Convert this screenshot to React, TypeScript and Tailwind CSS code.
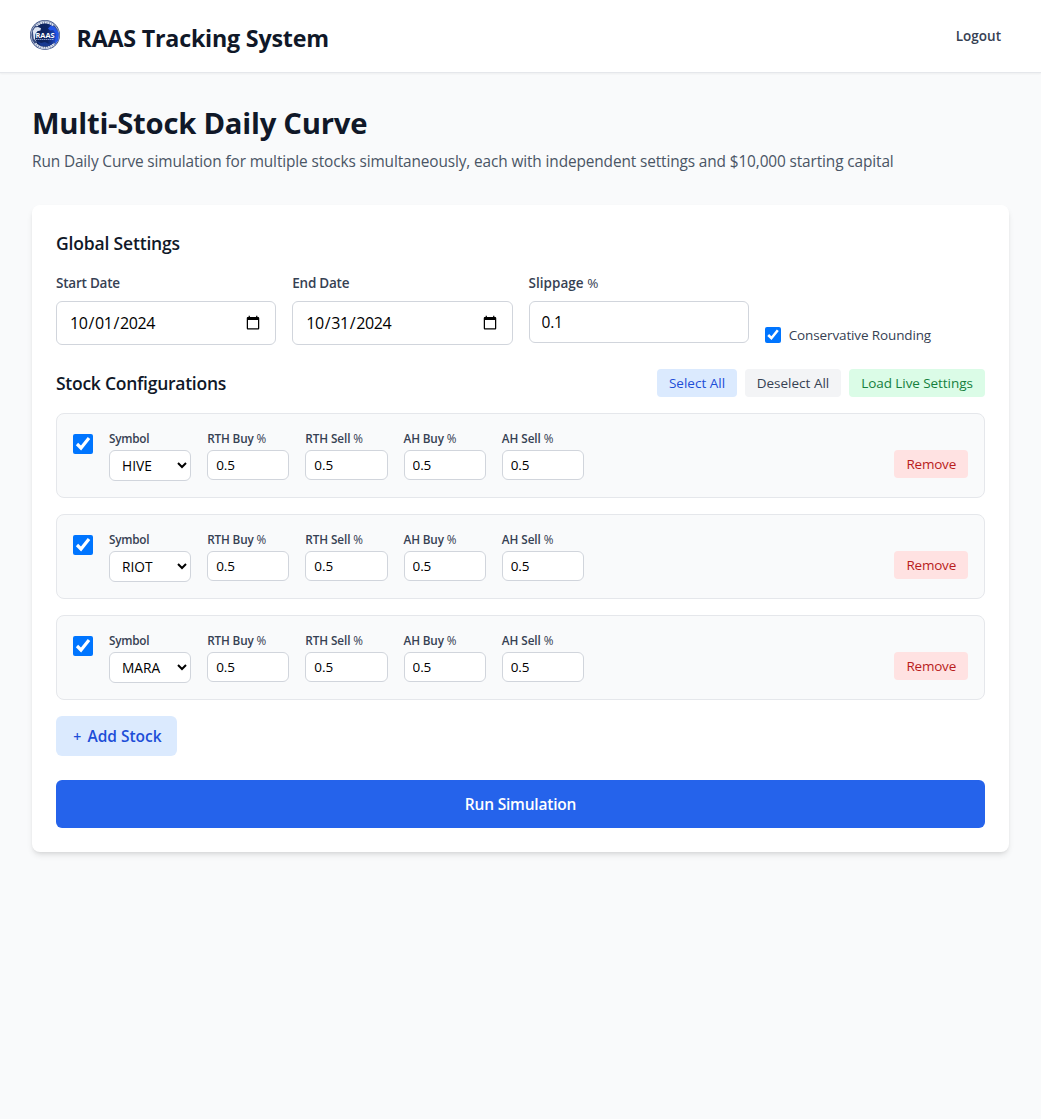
import { useState } from "react";

const FIELDS = [
  { label: "RTH Buy", tracking: "tracking-[-0.15px]" },
  { label: "RTH Sell", tracking: "tracking-[-0.1px]" },
  { label: "AH Buy", tracking: "tracking-[-0.15px]" },
  { label: "AH Sell", tracking: "tracking-[-0.05px]" },
];
const SYMBOLS = ["HIVE", "RIOT", "MARA"];

function Logo() {
  return (
    <svg viewBox="0 0 30 30" className="h-[30px] w-[30px]">
      <defs>
        <linearGradient id="seal" x1="0" x2="1">
          <stop offset="0" stopColor="#0f2358" />
          <stop offset="0.6" stopColor="#0d2463" />
          <stop offset="1" stopColor="#1f4bd0" />
        </linearGradient>
      </defs>
      <circle cx="15" cy="15" r="15" fill="#364b80" />
      <circle cx="15" cy="15" r="14" fill="none" stroke="#c3cbdd" strokeWidth=".8" />
      <path d="M6.5 6A12.4 12.4 0 0 1 23.5 6M5.5 23.2A12.4 12.4 0 0 0 24.5 23.2" fill="none" stroke="#dfe5f0" strokeWidth="2.4" strokeDasharray="1.8 .5" />
      <circle cx="15" cy="15" r="11.6" fill="url(#seal)" />
      <path d="M2.8 11 5 7.5 8 7l3 1.2-.6 2.3-3 .7L5.4 14l-.4 5L7 23l-3.4-4.5Z" fill="#dfe6f3" />
      <path d="m18 8.5 3-3 4 1.5 3.8 6-.4 7-3.9 5 .9-6 .8-5-3-4-3 .5Z" fill="#2456e8" />
      <path d="m7 21 4 2 4-1 4 2 3-2-3 4h-8Z" fill="#183a91" />
      <text x="15" y="17.5" textAnchor="middle" fontSize="7" fontWeight="700" textLength="19" lengthAdjust="spacingAndGlyphs" fill="#fff" fontFamily="Open Sans, sans-serif">
        RAAS
      </text>
      <path d="M6 19.5h18" stroke="#8fa3d2" strokeWidth=".9" strokeDasharray="1.5 .5" />
    </svg>
  );
}

function Check({ big = false, checked, onChange }: { big?: boolean; checked: boolean; onChange: () => void }) {
  return (
    <input
      type="checkbox"
      checked={checked}
      onChange={onChange}
      className={big ? "mt-1 h-5 w-5 shrink-0" : "h-4 w-4 shrink-0"}
    />
  );
}

function DateField({ label, value }: { label: string; value: string }) {
  return (
    <div>
      <label className="mb-2 block text-[13.5px] leading-5 font-semibold tracking-[-0.23px] text-gray-700">{label}</label>
      <input
        type="date"
        defaultValue={value}
        className="block h-11 w-full rounded-md border border-gray-300 bg-white px-3 py-2 text-base tracking-[-0.4px] text-black"
      />
    </div>
  );
}

function StockRow({ symbol, checked, onToggle }: { symbol: string; checked: boolean; onToggle: () => void }) {
  return (
    <div className="flex h-[85px] items-start gap-4 rounded-lg border border-gray-200 bg-gray-50 p-4">
      <Check big checked={checked} onChange={onToggle} />
      <div className="grid flex-1 grid-cols-8 gap-4">
        <div>
          <label className="mb-1 block text-[11.75px] leading-4 font-semibold tracking-[-0.25px] text-gray-700">Symbol</label>
          <select
            defaultValue={symbol}
            className="block h-[31px] w-full rounded-md border border-gray-300 bg-white px-2 text-[13.75px] text-black"
          >
            {SYMBOLS.map((s) => (
              <option key={s}>{s}</option>
            ))}
          </select>
        </div>
        {FIELDS.map(({ label, tracking }) => (
          <div key={label}>
            <label className={`mb-1 block text-[11.75px] leading-4 font-semibold whitespace-nowrap text-gray-700 ${tracking}`}>
              {label} <span className="font-normal">%</span>
            </label>
            <input
              type="number"
              defaultValue="0.5"
              className="block h-[30px] w-full rounded-md border border-gray-300 bg-white px-2 py-1 text-[13.5px] leading-5 tracking-[-0.1px] text-black"
            />
          </div>
        ))}
      </div>
      <button className="mt-5 h-7 w-[73.55px] rounded bg-red-100 text-[13.5px] tracking-[-0.2px] text-[#b91c1c]">Remove</button>
    </div>
  );
}

export default function App() {
  const [checked, setChecked] = useState([true, true, true]);
  const [rounding, setRounding] = useState(true);

  return (
    <div className="min-h-screen bg-gray-50 font-['Open_Sans','Noto_Sans',sans-serif]">
      <header className="flex h-[73px] items-center justify-between border-b border-gray-200 bg-white pr-10 pl-[30px] shadow-[0_1px_2px_0_rgb(0_0_0/0.05)]">
        <div className="flex items-center gap-4">
          <div className="-mt-[2px]">
            <Logo />
          </div>
          <span className="mt-[3px] pl-[0.5px] text-[23.25px] leading-8 font-bold tracking-[-0.21px] text-gray-900">RAAS Tracking System</span>
        </div>
        <button className="text-[13.5px] leading-5 font-semibold text-gray-700">Logout</button>
      </header>

      <main className="p-8">
        <h1 className="mb-2 text-[29.25px] leading-9 font-bold tracking-[-0.25px] text-gray-900">Multi-Stock Daily Curve</h1>
        <p className="mb-[31px] pt-px text-[15.4px] leading-6 tracking-[-0.122px] whitespace-nowrap text-gray-600">
          Run Daily Curve simulation for multiple stocks simultaneously, each with independent settings and $10,000 starting capital
        </p>

        <section className="rounded-lg bg-white p-6 shadow-md">
          <h2 className="mb-4 text-[17.5px] leading-7 font-semibold tracking-[-0.17px] text-gray-900">Global Settings</h2>
          <div className="mb-6 grid grid-cols-4 gap-4">
            <DateField label="Start Date" value="2024-10-01" />
            <DateField label="End Date" value="2024-10-31" />
            <div>
              <label className="mb-2 block text-[13.5px] leading-5 font-semibold tracking-[0.03px] text-gray-700">
                Slippage <span className="font-normal">%</span>
              </label>
              <input
                type="number"
                defaultValue="0.1"
                className="block h-[42px] w-full rounded-md border border-gray-300 bg-white px-3 py-2 text-[15.5px] leading-6 tracking-[-0.2px] text-black"
              />
            </div>
            <label className="flex items-center gap-2 self-end text-[13.5px] leading-5 tracking-[-0.13px] whitespace-nowrap text-gray-700">
              <Check checked={rounding} onChange={() => setRounding(!rounding)} />
              Conservative Rounding
            </label>
          </div>

          <div className="mb-4 flex items-center justify-between">
            <h2 className="text-[17.5px] leading-7 font-semibold tracking-[-0.26px] text-gray-900">Stock Configurations</h2>
            <div className="flex gap-2 text-[13.5px]">
              <button onClick={() => setChecked([true, true, true])} className="h-7 w-20 rounded bg-blue-100 text-[#1d4ed8]">
                Select All
              </button>
              <button onClick={() => setChecked([false, false, false])} className="h-7 w-24 rounded bg-gray-100 text-gray-700">
                Deselect All
              </button>
              <button className="h-7 w-[136px] rounded bg-green-100 tracking-[-0.07px] text-[#15803d]">Load Live Settings</button>
            </div>
          </div>

          <div className="space-y-4">
            {SYMBOLS.map((s, i) => (
              <StockRow
                key={s}
                symbol={s}
                checked={checked[i]}
                onToggle={() => setChecked(checked.map((c, j) => (j === i ? !c : c)))}
              />
            ))}
          </div>

          <button className="mt-4 block h-10 w-[121px] rounded-md bg-blue-100 pt-0.5 pl-0.5 text-[15.5px] font-semibold text-[#1d4ed8]">
            <span className="mr-0.5 text-sm">+</span> Add Stock
          </button>
          <button className="mt-6 block h-12 w-full rounded-md bg-[#2563eb] pt-0.5 text-[15.5px] font-semibold tracking-[-0.2px] text-white">
            Run Simulation
          </button>
        </section>
      </main>
    </div>
  );
}
